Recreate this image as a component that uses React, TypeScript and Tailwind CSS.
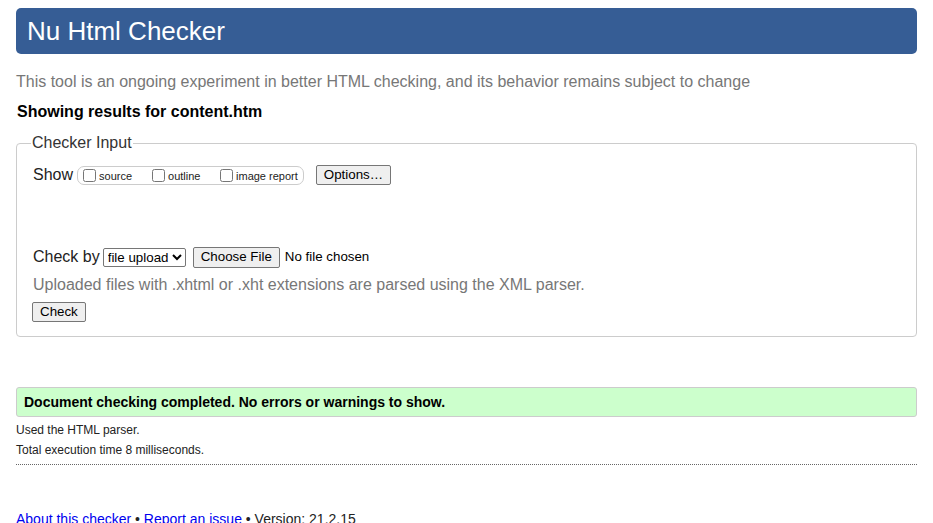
import React from 'react';

const btn =
  'border border-[#767676] bg-[#efefef] rounded-[2px] text-[13.33px] leading-[16px] text-black px-[7px] py-[1px] font-["Liberation_Sans",Arial,sans-serif]';

const App: React.FC = () => {
  return (
    <div className='min-h-[523px] bg-white px-4 pt-2 font-["Liberation_Sans",Arial,sans-serif] text-[#222]'>
      {/* Header */}
      <header className="h-[46px] bg-[#365d95] rounded-[5px] flex items-center px-[11px]">
        <h1 className="text-white text-[26px] leading-none">Nu Html Checker</h1>
      </header>

      <p className="mt-[19px] text-[16px] leading-[18px] text-[#777]">
        This tool is an ongoing experiment in better HTML checking, and its behavior remains subject to change
      </p>
      <p className="mt-[12px] text-[16px] leading-[18px] font-bold text-black pl-px">
        Showing results for content.htm
      </p>

      {/* Checker input */}
      <fieldset className="mt-[13px] border border-[#ccc] rounded-[4px] pl-[16px] pr-4 pb-[13px] h-[203px]">
        <legend className="px-px -ml-[2px] text-[16px] leading-[18px] text-[#333]">Checker Input</legend>

        <div className="flex items-center mt-[12px] h-[22px]">
          <span className="text-[16px] text-[#222]">Show</span>
          <div className="ml-[4px] flex items-center border border-[#ccc] rounded-[7px] h-[19px] pl-[5px] pr-[5px] text-[11px] text-[#222]">
            <label className="flex items-center w-[69px]">
              <input type="checkbox" className="m-0 w-[13px] h-[13px]" />
              <span className="ml-[3px] mt-[2px]">source</span>
            </label>
            <label className="flex items-center w-[68px]">
              <input type="checkbox" className="m-0 w-[13px] h-[13px]" />
              <span className="ml-[3px] mt-[2px]">outline</span>
            </label>
            <label className="flex items-center">
              <input type="checkbox" className="m-0 w-[13px] h-[13px]" />
              <span className="ml-[3px] mt-[2px]">image report</span>
            </label>
          </div>
          <button className={`${btn} ml-[12px] h-[20px]`}>Options…</button>
        </div>

        <div className="mt-[60px] flex items-center h-[22px]">
          <span className="text-[16px] text-[#222]">Check by</span>
          <select className='ml-[3px] h-[19px] border border-[#767676] rounded-[2px] text-[13.33px] leading-[16px] text-black bg-white font-["Liberation_Sans",Arial,sans-serif]'>
            <option>file upload</option>
          </select>
          <button className={`${btn} ml-[7px] h-[21px]`}>Choose File</button>
          <span className="ml-[5px] text-[13.33px] text-black">No file chosen</span>
        </div>

        <p className="mt-[8px] text-[16px] leading-[18px] text-[#777]">
          Uploaded files with .xhtml or .xht extensions are parsed using the XML parser.
        </p>

        <button className={`${btn} mt-[8px] -ml-px h-[20px]`}>Check</button>
      </fieldset>

      {/* Result */}
      <div className="mt-[50px] h-[30px] bg-[#ccffcc] border border-[#ccc] rounded-[3px] flex items-center px-[7px]">
        <p className="text-[14px] font-bold text-black">Document checking completed. No errors or warnings to show.</p>
      </div>

      <p className="mt-[6px] text-[12px] leading-[14px] text-[#222]">Used the HTML parser.</p>
      <p className="mt-[6px] text-[12px] leading-[14px] text-[#222]">Total execution time 8 milliseconds.</p>

      <hr className="mt-[7px] border-0 border-t border-dotted border-[#666]" />

      <p className="mt-[46px] text-[14px] leading-[16px] text-[#222]">
        <a href="#" className="text-[#0000ee] underline">About this checker</a>
        {' • '}
        <a href="#" className="text-[#0000ee] underline">Report an issue</a>
        {' • Version: 21.2.15'}
      </p>
    </div>
  );
};

export default App;
